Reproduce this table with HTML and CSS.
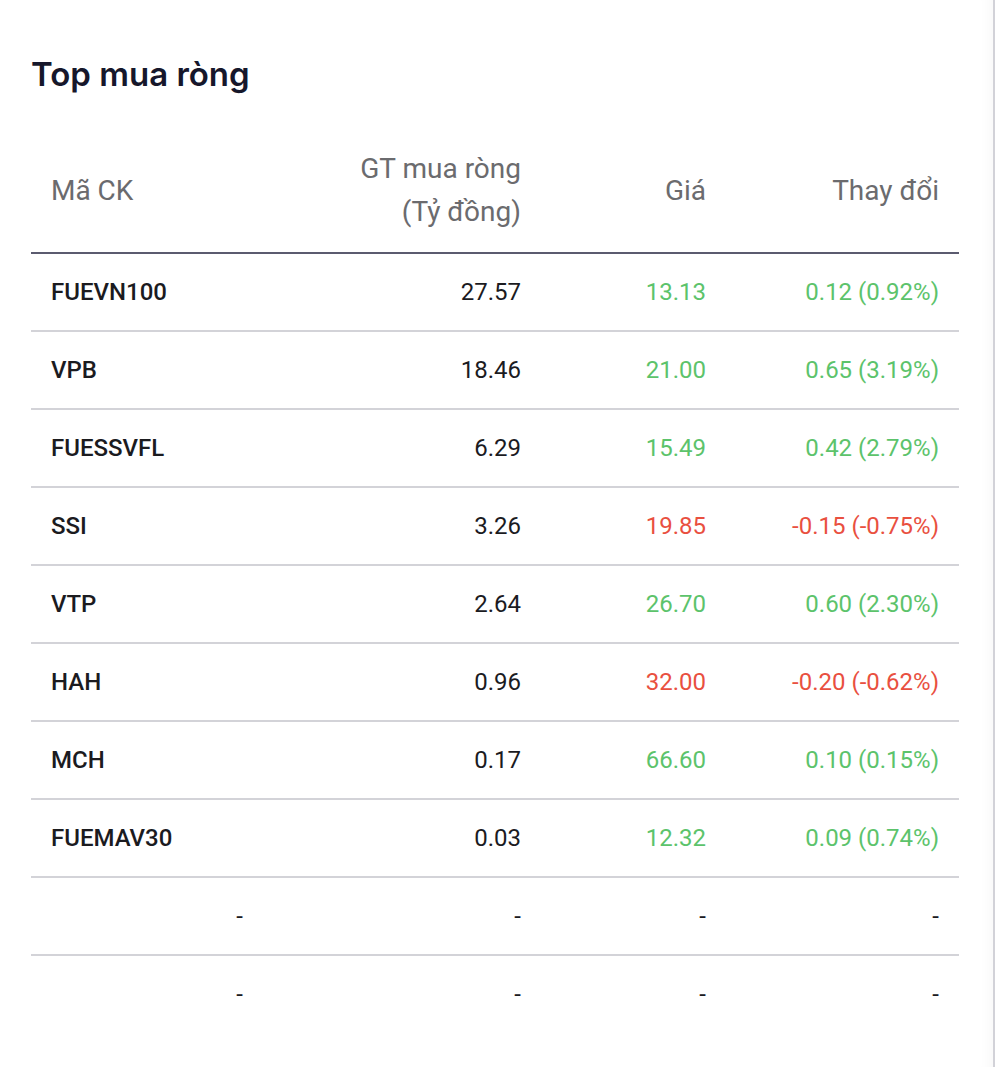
FILE: index.html
```html
<!DOCTYPE html>
<html lang="vi">
<head>
<meta charset="utf-8">
<title>Top mua ròng</title>
<link rel="stylesheet" href="styles.css">
</head>
<body>
<section class="card">
  <h2 class="title">Top mua ròng</h2>
  <table class="grid">
    <colgroup>
      <col class="c1"><col class="c2"><col class="c3"><col class="c4">
    </colgroup>
    <thead>
      <tr>
        <th class="left">Mã CK</th>
        <th>GT mua ròng<br>(Tỷ đồng)</th>
        <th>Giá</th>
        <th>Thay đổi</th>
      </tr>
    </thead>
    <tbody>
      <tr><td class="sym">FUEVN100</td><td>27.57</td><td class="up">13.13</td><td class="up">0.12 (0.92%)</td></tr>
      <tr><td class="sym">VPB</td><td>18.46</td><td class="up">21.00</td><td class="up">0.65 (3.19%)</td></tr>
      <tr><td class="sym">FUESSVFL</td><td>6.29</td><td class="up">15.49</td><td class="up">0.42 (2.79%)</td></tr>
      <tr><td class="sym">SSI</td><td>3.26</td><td class="down">19.85</td><td class="down">-0.15 (-0.75%)</td></tr>
      <tr><td class="sym">VTP</td><td>2.64</td><td class="up">26.70</td><td class="up">0.60 (2.30%)</td></tr>
      <tr><td class="sym">HAH</td><td>0.96</td><td class="down">32.00</td><td class="down">-0.20 (-0.62%)</td></tr>
      <tr><td class="sym">MCH</td><td>0.17</td><td class="up">66.60</td><td class="up">0.10 (0.15%)</td></tr>
      <tr><td class="sym">FUEMAV30</td><td>0.03</td><td class="up">12.32</td><td class="up">0.09 (0.74%)</td></tr>
      <tr class="empty"><td>-</td><td>-</td><td>-</td><td>-</td></tr>
      <tr class="empty last"><td>-</td><td>-</td><td>-</td><td>-</td></tr>
    </tbody>
  </table>
</section>
</body>
</html>
```
FILE: styles.css
```css
html, body {
  margin: 0;
  padding: 0;
  background: #ffffff;
}
body {
  font-family: Roboto, "Noto Sans", "Liberation Sans", sans-serif;
  color: #1b1b1f;
}
.card {
  width: 995px;
  min-height: 1067px;
  box-sizing: border-box;
  padding: 56px 36px 0 31px;
  border-right: 2px solid #d2d2d8;
  box-shadow: inset -14px 0 14px -12px rgba(0, 0, 0, 0.04);
}
.title {
  margin: 0 0 35px 0;
  font-family: Inter, Roboto, sans-serif;
  font-size: 33px;
  line-height: 37px;
  font-weight: 600;
  color: #16172b;
}
.grid {
  width: 928px;
  border-collapse: collapse;
  table-layout: fixed;
}
.c1 { width: 232px; }
.c2 { width: 278px; }
.c3 { width: 185px; }
.c4 { width: 233px; }
.grid th {
  font-size: 28px;
  line-height: 43px;
  font-weight: 400;
  color: #6b6b6e;
  text-align: right;
  padding: 19px 20px 19px 20px;
  border-bottom: 2px solid #5b5b6f;
  white-space: nowrap;
}
.grid th.left {
  text-align: left;
}
.grid td {
  font-size: 24px;
  line-height: 28px;
  padding: 24px 20px;
  text-align: right;
  border-bottom: 2px solid #d3d3d8;
  white-space: nowrap;
}
.grid td.sym {
  text-align: left;
  font-weight: 500;
}
.grid .up { color: #5cc36b; }
.grid .down { color: #e9503f; }
.grid tr.last td { border-bottom: none; }
```
